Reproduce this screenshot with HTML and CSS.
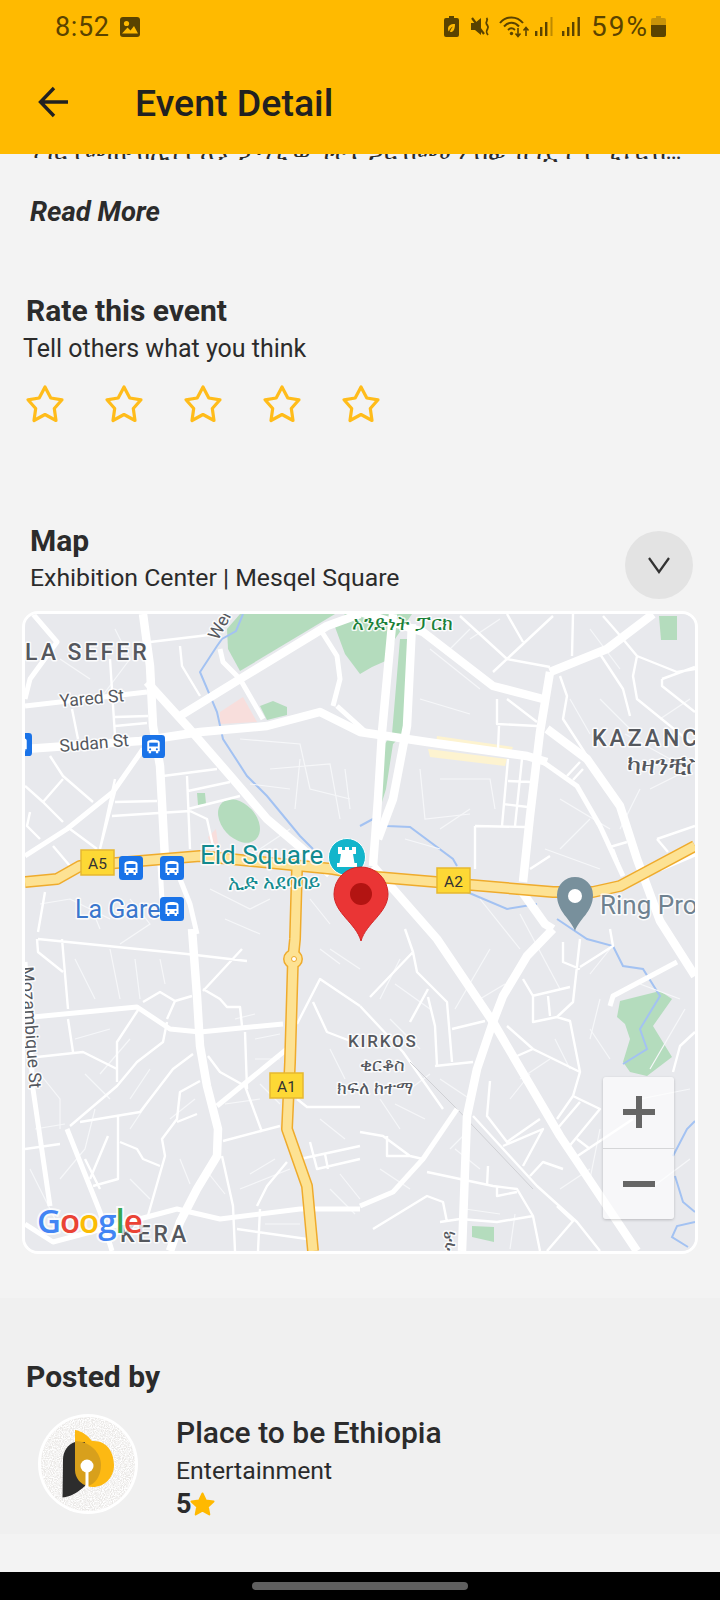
FILE: index.html
```html
<!DOCTYPE html>
<html lang="en">
<head>
    <meta charset="UTF-8">
    <meta name="viewport" content="width=device-width, initial-scale=1.0">
    <title>Event Detail</title>
    <link rel="stylesheet" href="styles.css">
</head>
<body>

<header class="top">
    <div class="status-bar">
        <span class="status-time">8:52</span>
        <svg class="status-image" width="20" height="20" viewBox="0 0 20 20">
            <rect width="20" height="20" rx="3" fill="#5a4300"/>
            <circle cx="6.5" cy="6.5" r="2.6" fill="#ffba00"/>
            <path d="M2 16.5 7.5 10.5 10.5 13.5 14 9 18 16.5Z" fill="#ffba00"/>
        </svg>
        <div class="status-right">
            <svg width="15" height="21" viewBox="0 0 15 21">
                <path d="M5 0h5v2h3a2 2 0 0 1 2 2v15a2 2 0 0 1-2 2H2a2 2 0 0 1-2-2V4a2 2 0 0 1 2-2h3Z" fill="#5a4300"/>
                <path d="M11 8C6 8 4 10 4 13c0 1 .4 2 1 2.500C5.500 13 7 11.500 9 10.500 7.500 12 6.500 13.500 6 16c3 .5 5-2 5-8Z" fill="#ffba00"/>
            </svg>
            <svg class="gap-mute" width="20" height="19" viewBox="0 0 20 19">
                <path d="M0 6h4l6-5v17l-6-5H0Z" fill="#5a4300"/>
                <path d="M1 1 13 17" stroke="#5a4300" stroke-width="2.200"/>
                <path d="M15.500 1c2.500 2.500-1.500 3.500 0 6s2.500 2.500 1 5-1.500 3.500.5 6" fill="none" stroke="#5a4300" stroke-width="1.800"/>
            </svg>
            <svg class="gap-wifi" width="31" height="23" viewBox="0 0 31 23">
                <g fill="none" stroke="#5a4300" stroke-width="2">
                    <path d="M1 8C7 .5 18 .5 24 8"/>
                    <path d="M5 11.500C9.500 6.500 15.500 6.500 20 11.500"/>
                    <path d="M9 15c2.500-2.500 4.500-2.500 7 0" stroke-width="1.800"/>
                    <path d="M19 13v8M16.500 18.500 19 21.500 21.500 18.500" stroke-width="1.600"/>
                    <path d="M27 21v-8M24.500 15.500 27 12.500 29.500 15.500" stroke-width="1.600"/>
                </g>
                <circle cx="12.500" cy="18.500" r="1.700" fill="#5a4300"/>
            </svg>
            <svg class="gap-signal" width="19" height="19" viewBox="0 0 19 19">
                <rect x="0" y="14" width="2.400" height="5" fill="#5a4300"/>
                <rect x="5" y="10" width="2.400" height="9" fill="#5a4300"/>
                <rect x="10" y="5" width="2.400" height="14" fill="#5a4300"/>
                <rect x="15.500" y="0" width="2" height="19" fill="#5a4300" opacity=".4"/>
            </svg>
            <svg class="gap-signal2" width="19" height="19" viewBox="0 0 19 19">
                <rect x="0" y="14" width="2.400" height="5" fill="#5a4300"/>
                <rect x="5" y="10" width="2.400" height="9" fill="#5a4300"/>
                <rect x="10" y="5" width="2.400" height="14" fill="#5a4300"/>
                <rect x="15.500" y="0" width="2.400" height="19" fill="#5a4300"/>
            </svg>
            <span class="status-percent">59%</span>
            <svg class="gap-battery" width="15" height="21" viewBox="0 0 15 21">
                <path d="M5 0h5v2h3a2 2 0 0 1 2 2v5H0V4a2 2 0 0 1 2-2h3Z" fill="#c99409"/>
                <path d="M0 9h15v10a2 2 0 0 1-2 2H2a2 2 0 0 1-2-2Z" fill="#5a4300"/>
            </svg>
        </div>
    </div>
    <div class="app-bar">
        <svg class="back-arrow" width="32" height="32" viewBox="0 0 32 32">
            <path d="M30 16H3M16 2 2.500 16 16 30" fill="none" stroke="#212121" stroke-width="3.400"/>
        </svg>
        <h1>Event Detail</h1>
    </div>
</header>

<main class="page">
    <div class="description-clip">
        <p>ሃገር የመጡ ከኢትዮጵያ ታዳጊ ወጣቶች ጋር በመሆን ሰፊ ዝግጅት የሚቀርብበት ትርኢት ሲሆን በዚህ መድረክ ላይ</p>
    </div>
    <a class="read-more" href="#">Read More</a>

    <section class="rate">
        <h2>Rate this event</h2>
        <p class="rate-sub">Tell others what you think</p>
        <div class="stars">
            <svg width="40" height="40" viewBox="0 0 40 40"><path class="star-line" d="M20 3 25.800 14 37 15.800 29.300 24.500 31 36.500 20 30.500 9 36.500 10.700 24.500 3 15.800 14.200 14Z"/></svg>
            <svg width="40" height="40" viewBox="0 0 40 40"><path class="star-line" d="M20 3 25.800 14 37 15.800 29.300 24.500 31 36.500 20 30.500 9 36.500 10.700 24.500 3 15.800 14.200 14Z"/></svg>
            <svg width="40" height="40" viewBox="0 0 40 40"><path class="star-line" d="M20 3 25.800 14 37 15.800 29.300 24.500 31 36.500 20 30.500 9 36.500 10.700 24.500 3 15.800 14.200 14Z"/></svg>
            <svg width="40" height="40" viewBox="0 0 40 40"><path class="star-line" d="M20 3 25.800 14 37 15.800 29.300 24.500 31 36.500 20 30.500 9 36.500 10.700 24.500 3 15.800 14.200 14Z"/></svg>
            <svg width="40" height="40" viewBox="0 0 40 40"><path class="star-line" d="M20 3 25.800 14 37 15.800 29.300 24.500 31 36.500 20 30.500 9 36.500 10.700 24.500 3 15.800 14.200 14Z"/></svg>
        </div>
    </section>

    <section class="map-section">
        <div class="map-head">
            <div>
                <h2>Map</h2>
                <p class="map-place">Exhibition Center | Mesqel Square</p>
            </div>
            <button class="collapse-btn">
                <svg width="24" height="18" viewBox="0 0 24 18"><path d="M2 2 12 16 22 2" fill="none" stroke="#333" stroke-width="2.200"/></svg>
            </button>
        </div>

        <div class="map-card">
            <!-- viewBox uses page coordinates so the roads are easy to read off the screenshot -->
            <svg class="map" width="670" height="637" viewBox="25 615 670 637">
                <defs>
                    <symbol id="bus" viewBox="0 0 24 24">
                        <rect width="24" height="24" rx="3.500" fill="#1a73e8"/>
                        <path d="M5.500 8c0-2 2-3 6.500-3s6.500 1 6.500 3v9h-1.500v2h-2.500v-2h-5v2h-2.500v-2H5.500Z" fill="#fff"/>
                        <rect x="7.500" y="8" width="9" height="4" fill="#1a73e8"/>
                        <circle cx="8.500" cy="14.800" r="1.100" fill="#1a73e8"/>
                        <circle cx="15.500" cy="14.800" r="1.100" fill="#1a73e8"/>
                    </symbol>
                </defs>
                <rect x="25" y="615" width="670" height="637" fill="#e8e9ed"/>

                <!-- parks and areas -->
                <g class="park">
                    <path d="M227 630 240 615H335L240 672 228 650Z"/>
                    <path d="M335 628 345 615H412L395 640 390 660 372 668 360 675 345 655Z"/>
                    <path d="M400 640 413 640 410 720 403 735 393 745 386 790 382 803 379 795 381 750 392 735Z"/>
                    <ellipse cx="239" cy="822" rx="25" ry="17" transform="rotate(48 239 822)"/>
                    <path d="M197 794 205 794 206 805 198 806Z"/>
                    <path d="M260 707 273 702 287 708 287 716 267 721Z"/>
                    <path d="M659 617H677V641H661Z"/>
                    <path d="M617 1018 620 1002 660 992 672 1000 653 1027 672 1058 647 1077 630 1073 623 1063 630 1040 625 1025Z"/>
                    <path d="M472 1227 494 1228 494 1243 472 1238Z"/>
                </g>
                <path d="M220 713 243 698 257 723 220 725Z" fill="#f8dedc"/>
                <path d="M208 838 216 830 218 845 212 850Z" fill="#f8dedc"/>
                <path d="M437 737 513 748 510 755 436 744ZM428 750 507 760 505 767 430 758Z" fill="#fdf3d0"/>

                <!-- water -->
                <g class="river">
                    <path d="M243 615 236 632 222 640 217 647 200 673 217 713 223 740 247 777 267 797 300 837 313 850"/>
                    <path d="M360 827 373 820 387 827 410 828 453 860 457 867"/>
                    <path d="M467 893 507 910 537 905"/>
                    <path d="M557 920 587 940 613 947 623 967 643 970 660 997 640 1030 647 1050 623 1065"/>
                    <path d="M695 1122 687 1130 673 1157"/>
                    <path d="M675 1177 683 1203 695 1213"/>
                    <path d="M695 1223 677 1227 672 1238 688 1248"/>
                </g>

                <!-- residential texture -->
                <path class="road-thin" d="M40 905 70 900 110 920M75 960 95 1000M110 950 120 1000M135 960 140 1000M160 960 165 985M40 1075 60 1100 60 1130M85 1075 110 1100M95 1110 85 1150 60 1180M150 1070 130 1100M170 1120 195 1100M130 1180 150 1200M180 1160 190 1185M225 1105 260 1100M235 1020 255 1015M255 1040 280 1035M255 1060 280 1060M260 1085 280 1105M250 1175 275 1160M330 1050 345 1080M320 1120 345 1140M340 1175 360 1200M390 1020 420 1050M440 1080 470 1100M395 1105 425 1120M380 1170 410 1190M455 1150 480 1170M480 1000 505 985M555 1040 570 1070M520 1080 550 1060M590 1030 610 1060M600 1130 590 1180M640 1100 690 1090M650 1190 690 1160M240 740 300 745 310 790 350 800M270 770 330 765 340 820M245 860 290 830M115 630 130 660 100 700M60 660 90 680M440 780 490 780 495 810M440 830 470 810M420 700 470 715M430 650 480 690M560 800 610 830M545 850 600 870M470 640 500 620M625 735 670 760M650 790 690 770M660 720 690 700M590 630 620 670M480 900 520 950M400 960 380 1000M330 950 360 970"/>
                <path class="road-thin" d="M130 900 150 925 120 945M90 905 100 930M210 890 250 910 270 900M225 920 260 935M310 900 330 925M340 965 320 950M395 985 430 1010M455 1010 490 950M520 915 560 990M590 975 610 950M640 985 680 1000M685 1010 650 1070M250 785 290 790M300 760 295 810M345 770 350 810M420 770 425 820 470 815M405 840 440 850M445 655 470 630M570 700 590 735M600 700 640 740M640 790 620 830M560 850 590 820M130 1040 100 1075M75 1040 110 1030M150 1100 130 1130M205 1170 225 1195M240 1190 290 1170M265 1225 300 1225M330 1190 355 1215M380 1100 400 1130M410 1090 430 1075M470 1130 450 1150M510 1100 530 1075M465 1210 500 1215M515 1215 510 1250M560 1190 590 1170M600 1000 590 1040M30 1170 60 1230M35 1130 65 1125"/>

                <!-- small streets -->
                <path class="road-small" d="M150 643 217 635M180 647 182 667 200 697M110 660 115 737M72 710 78 740M115 718 148 717M115 727 147 724M163 777 217 770M187 777 190 850M188 792 230 783M188 810 240 797M112 817 190 812M115 803 157 802M190 812 207 820 213 847M100 850 115 793M25 787 43 803 63 823M43 803 63 780M50 757 63 777 93 803M70 830 97 850M53 847 70 867M30 813 27 827 40 840M45 893 38 933M115 780 100 850"/>
                <path class="road-small" d="M460 617 507 660M507 615 523 643M493 673 553 617M507 660 550 668M573 615 572 657M603 617 617 633 637 657 677 673 695 670M600 655 623 690 630 717M637 657 633 677 637 700 695 747M662 680 662 687 695 713M662 680 695 668M560 677 567 697 563 720 587 757M497 700 497 725 537 727M507 700 537 723M499 727 498 750M508 760 502 827M522 760 515 827M508 782 532 783M503 805 528 808M475 827 525 828M475 827 475 870M530 870 550 857M567 777 580 763M573 781 583 770M610 848 627 843M613 850 623 877M657 840 695 827M657 840 668 853"/>
                <path class="road-small" d="M38 940 187 955 247 962M37 940 38 953 63 973M62 940 68 1010M68 1020 73 1053M37 1058 83 1053 117 1070M70 1127 117 1087 137 1063 163 1043 167 1023M140 1008 117 1043 117 1083M143 1003 160 993 175 1002 167 1020M175 1002 192 997M80 1123 140 1113 173 1070 193 1055M177 1123 197 1115M200 1082 180 1093 177 1120 162 1140 165 1157 147 1220M120 1143 137 1150 143 1160 160 1167M118 1117 118 1180 93 1187M108 1137 90 1180M203 992 242 950M203 990 220 1000 227 1008 240 1008 242 1027M208 1057 220 1073 245 1087 262 1133M245 1033 247 1090M223 1142 280 1127M222 1157 233 1207 235 1252M257 1207 267 1187 287 1163M300 1160 360 1147M310 1143 317 1170 360 1160M325 1155 328 1170M297 1025 320 980 360 1007M313 1003 327 1033 353 1043M297 1100 307 1108 360 1108M237 1230 307 1240M260 1210 258 1252M25 1150 60 1145M100 1190 85 1160"/>
                <path class="road-small" d="M370 998 413 953 405 930M413 953 417 973 447 1003 452 1063M428 990 410 1023M428 998 435 1027 437 1067M360 1007 403 1053 443 1110M452 1030 485 1022M435 1067 473 1063M532 997 570 988M523 980 533 997 533 1023 557 1018 570 1022 580 1073 573 1097 557 1120M548 997 550 1017M507 1027 533 1050 580 1073M517 1057 533 1050M540 1120 507 1143 487 1117 490 1082M503 1147 543 1130 523 1167M573 1097 600 1110 567 1150M580 1103 557 1130M577 1140 590 1150M530 1177 543 1163 563 1170M573 1160 633 1120M360 1133 383 1137 410 1157 423 1160M387 1137 387 1157 410 1157M427 1173 460 1180 493 1187 517 1190 533 1217 540 1252M497 1187 497 1197 517 1193M487 1187 488 1167M373 1230 427 1197 443 1203 447 1223M440 1223 460 1220 497 1223 533 1217M557 1207 573 1222 547 1252M563 943 563 963 580 970M580 940 573 1003 557 1018M580 968 613 947 610 930M673 1073 680 1047 695 1033M473 1117 537 1187 577 1223 600 1252"/>
                <path class="rail" d="M410 1063 457 1110 533 1190"/>

                <!-- bigger roads -->
                <g class="road-mid">
                    <path d="M220 650 223 663 240 680 263 720"/>
                    <path d="M320 630 337 657 340 680 333 707"/>
                    <path d="M337 707 368 735"/>
                    <path d="M25 707 147 693"/>
                    <path d="M610 1007 613 997 677 963"/>
                    <path d="M695 855 660 870"/>
                    <path d="M67 1130 100 1213 112 1252"/>
                    <path d="M25 963 33 1090 50 1207"/>
                    <path d="M160 865 163 920"/>
                    <path d="M180 880 190 905 197 935"/>
                    <path d="M457 1110 423 1160 393 1193 360 1207"/>
                    <path d="M287 1050 217 1107"/>
                    <path d="M25 1225 53 1243 177 1210 220 1220 300 1210 360 1210"/>
                    <path d="M33 1018 137 1008 170 1030 200 1033 283 1025"/>
                    <path d="M543 763 577 787 600 827 623 877"/>
                    <path d="M33 615 57 643 30 680 25 700"/>
                    <path d="M143 750 113 793 67 830 25 857"/>
                </g>
                <g class="road-big">
                    <path d="M143 615 150 667 153 727 160 767 165 860"/>
                    <path d="M192 930 197 997 200 1047 207 1087 218 1130 217 1157 197 1190 180 1223 170 1252"/>
                    <path d="M147 683 187 727 233 780 267 820 300 848 330 875"/>
                    <path d="M180 717 240 680 327 627 360 615"/>
                    <path d="M360 613 423 633 493 687 543 700"/>
                    <path d="M25 750 140 742 200 733 267 727 320 713 360 733 427 743 527 757 547 763"/>
                    <path d="M393 615 382 733 378 800 373 867"/>
                    <path d="M412 625 407 727 393 800 378 840"/>
                    <path d="M373 867 437 940 493 1023 560 1137 637 1252"/>
                    <path d="M550 673 540 733 530 817 523 883"/>
                    <path d="M550 673 607 650 653 615"/>
                    <path d="M547 730 587 760 620 807 637 860 660 922 695 977"/>
                    <path d="M553 930 527 957 503 997 493 1023 477 1070 467 1117 462 1252"/>
                    <path d="M520 890 545 925 553 930"/>
                </g>

                <!-- highways, casing then fill -->
                <g class="hw-case">
                    <path d="M25 883 57 880 80 867 200 857 333 870 377 878 553 893 593 893 620 887 695 847"/>
                    <path d="M297 870 295 940 293 960 290 1063 287 1130 307 1187 313 1252"/>
                    <circle cx="293" cy="960" r="4"/>
                </g>
                <g class="hw-fill">
                    <path d="M25 883 57 880 80 867 200 857 333 870 377 878 553 893 593 893 620 887 695 847"/>
                    <path d="M297 870 295 940 293 960 290 1063 287 1130 307 1187 313 1252"/>
                    <circle cx="293" cy="960" r="4"/>
                </g>
                <circle cx="294" cy="960" r="2.500" fill="#fff" stroke="#eea92b"/>

                <!-- highway signs -->
                <rect class="sign" x="81" y="851" width="33" height="25"/>
                <text class="sign-text" x="97.500" y="870">A5</text>
                <rect class="sign" x="437" y="869" width="33" height="25"/>
                <text class="sign-text" x="453.500" y="888">A2</text>
                <rect class="sign" x="270" y="1074" width="33" height="25"/>
                <text class="sign-text" x="286.500" y="1093">A1</text>

                <!-- labels -->
                <text class="lbl area" x="25" y="661">LA SEFER</text>
                <text class="lbl street" x="60" y="708" transform="rotate(-5 60 708)">Yared St</text>
                <text class="lbl street" x="60" y="753" transform="rotate(-5 60 753)">Sudan St</text>
                <text class="lbl street" x="218" y="642" transform="rotate(-62 218 642)">Wer</text>
                <text class="lbl street" x="21" y="968" transform="rotate(86 21 968)">Mozambique St</text>
                <text class="lbl street" x="455" y="1252" transform="rotate(-90 455 1252)">ጎዳ</text>
                <text class="lbl poi-teal big" x="200" y="865">Eid Square</text>
                <text class="lbl poi-teal small" x="228" y="890">ኢድ አደባባይ</text>
                <text class="lbl poi-blue" x="75" y="919">La Gare</text>
                <text class="lbl poi-green" x="352" y="631">አንድነት ፓርክ</text>
                <text class="lbl area" x="592" y="747">KAZANC</text>
                <text class="lbl area-am" x="627" y="775">ካዛንቺስ</text>
                <text class="lbl poi-gray big" x="600" y="915">Ring Pro</text>
                <text class="lbl area small-area" x="348" y="1048">KIRKOS</text>
                <text class="lbl area-am small-am" x="360" y="1072">ቂርቆስ</text>
                <text class="lbl area-am small-am" x="337" y="1095">ክፍለ ከተማ</text>
                <text class="lbl area" x="120" y="1243">KERA</text>

                <!-- bus stops -->
                <use href="#bus" x="142" y="736" width="23" height="23"/>
                <use href="#bus" x="9" y="734" width="23" height="23"/>
                <use href="#bus" x="119" y="857" width="24" height="24"/>
                <use href="#bus" x="160" y="857" width="24" height="24"/>
                <use href="#bus" x="160" y="898" width="24" height="24"/>

                <!-- Eid Square marker -->
                <circle cx="347" cy="858" r="18.500" fill="#12b5cb" stroke="#fff"/>
                <path d="M338 848h4v3h3v-3h4v3h3v-3h4v7h-3l1.500 9h2.500v4h-20v-4h2.500l1.500-9h-3Z" fill="#fff"/>

                <!-- gray pin -->
                <path d="M575 932C571 920 557 913 557 896a18 18 0 0 1 36 0C593 913 579 920 575 932Z" fill="#78909c"/>
                <circle cx="575" cy="897" r="7" fill="#fff"/>

                <!-- selected pin -->
                <path d="M361 942C356 924 334 914 334 895a27 27 0 0 1 54 0C388 914 366 924 361 942Z" fill="#ea3535" stroke="#d32525"/>
                <circle cx="361" cy="895" r="11" fill="#b31412"/>

                <text class="google" x="37" y="1234"><tspan fill="#4285f4">G</tspan><tspan fill="#ea4335">o</tspan><tspan fill="#fbbc05">o</tspan><tspan fill="#4285f4">g</tspan><tspan fill="#34a853">l</tspan><tspan fill="#ea4335">e</tspan></text>
            </svg>

            <div class="map-zoom">
                <div class="zoom-btn">
                    <svg width="32" height="32" viewBox="0 0 32 32"><path d="M16 0V32M0 16H32" stroke="#666" stroke-width="6"/></svg>
                </div>
                <div class="zoom-btn">
                    <svg width="32" height="6" viewBox="0 0 32 6"><path d="M0 3H32" stroke="#666" stroke-width="6"/></svg>
                </div>
            </div>
        </div>
    </section>

    <section class="posted">
        <h2>Posted by</h2>
        <div class="poster">
            <svg class="avatar" width="100" height="100" viewBox="0 0 100 100">
                <defs>
                    <clipPath id="avatar-clip"><circle cx="50" cy="50" r="47"/></clipPath>
                    <filter id="grain" x="0" y="0" width="100%" height="100%">
                        <feTurbulence type="fractalNoise" baseFrequency="0.9" numOctaves="2"/>
                        <feColorMatrix values="0 0 0 0 1  0 0 0 0 1  0 0 0 0 1  0 0 0 3 -1"/>
                    </filter>
                </defs>
                <circle cx="50" cy="50" r="50" fill="#fff"/>
                <circle cx="50" cy="50" r="47" fill="#eae8e6"/>
                <g clip-path="url(#avatar-clip)">
                    <rect width="100" height="100" filter="url(#grain)"/>
                </g>
                <path d="M37 16C44 17 50 22 54 27 70 26 76 40 76 51 76 64 66 73 55 73 46 73 37 66 37 56Z" fill="#fdb913"/>
                <path d="M37 28C30 30 25 37 25 46L24.500 83.500C33 83 40 78 47 72V28Z" fill="#2d2d2d"/>
                <path d="M37 27C52 27 63 39 63 51 63 62 57 70 50 72 43 71 37 64 37 56Z" fill="#d8a01c"/>
                <circle cx="49" cy="52" r="6.500" fill="#fff"/>
                <rect x="47.500" y="55" width="3" height="19" fill="#fff"/>
            </svg>
            <div class="poster-info">
                <div class="poster-name">Place to be Ethiopia</div>
                <div class="poster-type">Entertainment</div>
                <div class="poster-rating">
                    <span>5</span>
                    <svg width="25" height="25" viewBox="0 0 25 25"><path d="M12.500 1.500 15.800 8.500 23.500 9.500 17.800 14.800 19.300 22.500 12.500 18.700 5.700 22.500 7.200 14.800 1.500 9.500 9.200 8.500Z" fill="#ffb900" stroke="#ffb900" stroke-width="2" stroke-linejoin="round"/></svg>
                </div>
            </div>
        </div>
    </section>
</main>

<div class="nav-bar"><div class="nav-handle"></div></div>

</body>
</html>
```

FILE: styles.css
```css
* {
    box-sizing: border-box;
}

body {
    margin: 0;
    width: 720px;
    height: 1600px;
    overflow: hidden;
    display: flex;
    flex-direction: column;
    font-family: 'Roboto', 'Noto Sans', 'DejaVu Sans', sans-serif;
    color: #2b2b2b;
    background-color: #f3f3f3;
}

h1,
h2,
p {
    margin: 0;
}

/* Header */

.top {
    height: 154px;
    flex-shrink: 0;
    background-color: #ffba00;
}

.status-bar {
    height: 53px;
    display: flex;
    align-items: center;
    padding: 0 54px 0 55px;
    color: #5a4300;
}

.status-time {
    font-size: 27px;
    letter-spacing: 0.6px;
}

.status-image {
    margin-left: 11px;
}

.status-right {
    margin-left: auto;
    display: flex;
    align-items: center;
}

.status-percent {
    font-size: 28px;
    letter-spacing: 2px;
    margin-left: 10px;
}

.gap-mute {
    margin-left: 12px;
}

.gap-wifi {
    margin-left: 8px;
}

.gap-signal {
    margin-left: 5px;
}

.gap-signal2 {
    margin-left: 8px;
}

.gap-battery {
    margin-left: 2px;
}

.app-bar {
    display: flex;
    align-items: center;
    height: 97px;
    padding-left: 38px;
}

.app-bar h1 {
    margin: 3px 0 0 65px;
    font-size: 37.500px;
    font-weight: 500;
    color: #212121;
}

/* Description tail under the header */

.description-clip {
    height: 8px;
    margin: 0 30px;
    overflow: hidden;
    display: flex;
    align-items: flex-end;
}

.description-clip p {
    width: 100%;
    font-size: 24px;
    line-height: 30px;
    white-space: nowrap;
    overflow: hidden;
    text-overflow: ellipsis;
    flex-shrink: 0;
    margin-bottom: -4px;
}

.read-more {
    display: block;
    margin: 35px 0 0 30px;
    font-size: 27.500px;
    line-height: 30px;
    font-weight: 700;
    font-style: italic;
    color: #2b2b2b;
    text-decoration: none;
}

/* Rating */

.rate {
    margin-top: 67px;
    padding-left: 26px;
}

.rate h2,
.map-head h2,
.posted h2 {
    font-size: 30px;
    line-height: 34px;
    font-weight: 700;
}

.rate-sub {
    margin: 5px 0 0 -3px;
    font-size: 25px;
    line-height: 32px;
}

.stars {
    display: flex;
    gap: 39px;
    margin: 19px 0 0 -1px;
}

.star-line {
    fill: none;
    stroke: #ffbc1a;
    stroke-width: 3.200;
    stroke-linejoin: round;
}

/* Map */

.map-section {
    margin-top: 100px;
    padding: 0 22px;
}

.map-head {
    display: flex;
    justify-content: space-between;
    align-items: flex-start;
    padding: 0 5px 0 8px;
}

.map-place {
    margin-top: 4px;
    font-size: 24.800px;
    line-height: 32px;
}

.collapse-btn {
    width: 68px;
    height: 68px;
    margin-top: 7px;
    border: none;
    border-radius: 50%;
    background-color: #e3e3e3;
    display: flex;
    align-items: center;
    justify-content: center;
}

.map-card {
    position: relative;
    width: 676px;
    height: 643px;
    margin-top: 12px;
    border: 3px solid #fff;
    border-radius: 16px;
    overflow: hidden;
}

.map {
    display: block;
}

.park {
    fill: #b4dcbd;
}

.river {
    fill: none;
    stroke: #a3c2f2;
    stroke-width: 2;
}

.road-thin {
    fill: none;
    stroke: #f6f7f9;
    stroke-width: 1.200;
}

.road-small {
    fill: none;
    stroke: #fff;
    stroke-width: 2.400;
    stroke-linejoin: round;
}

.rail {
    fill: none;
    stroke: #cfd0d4;
    stroke-width: 1;
}

.road-mid path {
    fill: none;
    stroke: #fff;
    stroke-width: 5;
    stroke-linejoin: round;
}

.road-big path {
    fill: none;
    stroke: #fff;
    stroke-width: 8.500;
    stroke-linejoin: round;
}

.hw-case path,
.hw-case circle {
    fill: none;
    stroke: #efab2c;
    stroke-width: 12;
    stroke-linejoin: round;
}

.hw-fill path,
.hw-fill circle {
    fill: none;
    stroke: #fde293;
    stroke-width: 9;
    stroke-linejoin: round;
}

.sign {
    fill: #fdd835;
    stroke: #e6b82f;
    stroke-width: 1.500;
}

.sign-text {
    font-size: 15.500px;
    fill: #333;
    text-anchor: middle;
}

.lbl {
    paint-order: stroke;
    stroke: rgba(255, 255, 255, 0.85);
    stroke-width: 3px;
    stroke-linejoin: round;
}

.area {
    font-size: 23px;
    font-weight: 500;
    letter-spacing: 3px;
    fill: #55585e;
}

.small-area {
    font-size: 17px;
    letter-spacing: 1.800px;
}

.area-am {
    font-size: 26px;
    fill: #55585e;
}

.small-am {
    font-size: 18px;
}

.street {
    font-size: 17.500px;
    fill: #55585e;
}

.big {
    font-size: 26px;
}

.small {
    font-size: 20px;
}

.poi-teal {
    fill: #128a8f;
}

.poi-blue {
    font-size: 25px;
    fill: #3a77cd;
}

.poi-gray {
    fill: #6f8290;
}

.poi-green {
    font-size: 20px;
    fill: #188038;
}

.google {
    font-family: 'Open Sans', sans-serif;
    font-size: 33px;
    font-weight: 600;
    letter-spacing: -1px;
    paint-order: stroke;
    stroke: rgba(255, 255, 255, 0.8);
    stroke-width: 4px;
}

.map-zoom {
    position: absolute;
    left: 578px;
    top: 463px;
    width: 71px;
    height: 142px;
    display: flex;
    flex-direction: column;
    background-color: rgba(255, 255, 255, 0.65);
    border-radius: 3px;
    box-shadow: 0 1px 3px rgba(0, 0, 0, 0.2);
}

.zoom-btn {
    flex: 1;
    display: flex;
    align-items: center;
    justify-content: center;
}

.zoom-btn + .zoom-btn {
    border-top: 1px solid #d5d6d8;
}

/* Posted by */

.posted {
    margin-top: 44px;
    height: 236px;
    padding: 62px 0 0 26px;
    background-color: #f0f0f0;
}

.poster {
    display: flex;
    margin: 20px 0 0 12px;
}

.poster-info {
    margin-left: 38px;
    margin-top: 2px;
}

.poster-name {
    font-size: 30px;
    line-height: 34px;
    font-weight: 500;
}

.poster-type {
    font-size: 24.800px;
    line-height: 32px;
    margin-top: 5px;
}

.poster-rating {
    display: flex;
    align-items: center;
    margin-top: 3px;
    font-size: 27px;
    font-weight: 700;
    line-height: 28px;
}

.poster-rating svg {
    margin-left: -2px;
}

/* Bottom nav */

.page {
    flex: 1;
    overflow: hidden;
}

.nav-bar {
    height: 28px;
    flex-shrink: 0;
    background-color: #000;
    display: flex;
    justify-content: center;
    padding-top: 10px;
}

.nav-handle {
    width: 216px;
    height: 8px;
    border-radius: 4px;
    background-color: #5f5f5f;
}
```
